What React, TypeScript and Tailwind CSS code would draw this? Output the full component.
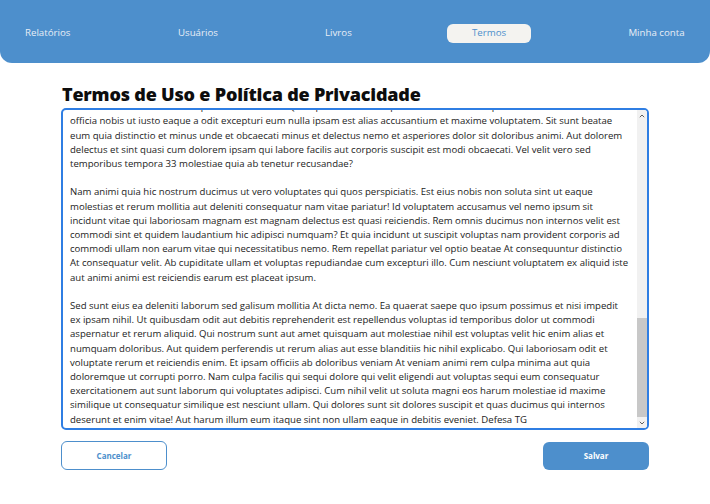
import React, { useEffect, useRef } from "react";

const termos = [
  "Lorem ipsum dolor sit amet. Sed voluptatem quia et accusamus nihil aut galisum quos est aliquam voluptas qui quia",
  "voluptatem est nulla autem. Et veritatis quia ut iusto voluptas ut minus natus sed consequatur dolores ut totam",
  "perferendis. Aut dolorem maiores ut eius voluptatibus ut corporis nesciunt qui obcaecati dolores quo galisum iure.",
  "Et harum minus aut rerum ipsam eum quaerat cupiditate ut voluptatum numquam sit laborum voluptas est quasi illum.",
  "Est sint similique et delectus molestiae sed dolorem fugiat ut nostrum architecto et itaque eligendi aut ipsam vero",
  "non voluptas tempore. Qui internos dolore et facilis temporibus ut ullam quasi non galisum ipsam et molestiae fugiat.",
  "Ut atque quis et quia dicta non laudantium sapiente vel voluptates harum et similique enim et accusantium dolorem.",
  "Aut illum suscipit ut dolorum omnis qui eligendi nobis ut excepturi voluptatem id dolor tempora vel perferendis nisi",
  "eum maxime eveniet. Vel accusamus quia est perspiciatis soluta sit odit quam.",
  "",
  "Est tempore minus et placeat omnis est nihil repellendus eos iure rerum. Et rerum quaerat sit voluptatibus galisum ut",
  "quia dolores non facere amet qui omnis enim et dolorem itaque. Quo quia voluptatem sed velit omnis aut earum eius ut",
  "voluptate deserunt aut voluptas nihil et aspernatur numquam. Sit dolor deleniti aut voluptatem culpa non dolores",
  "internos ut quisquam magnam ut ipsa blanditiis. Aut vitae perferendis ea sunt velit aut quod maiores et sint iste et",
  "dolorem officia. Non esse veniam et quia expedita eos minima nostrum est praesentium ducimus quo temporibus odit.",
  "Et galisum voluptatem sed quae illum aut eius repellat aut dolorem minus et veritatis sint qui sunt consequatur qui",
  "tenetur nobis. Aut iste cupiditate qui harum quia ut laudantium voluptatibus ut molestias aperiam ut optio libero.",
  "Quo quidem voluptate aut rerum nihil rem omnis nulla id cumque dolor et officiis omnis et accusamus pariatur aut",
  "perspiciatis molestias. Et incidunt quibusdam et eaque quia sed dolorem repellendus.",
  "",
  "Aut eius sequi ea reprehenderit dolorem et dolore perspiciatis aut consequatur sint qui ipsa illo. Qui esse magnam",
  "et nesciunt quaerat sed ducimus sunt ut laborum dicta vel illum quam et numquam possimus. Sit quia commodi ab",
  "architecto omnis et libero magni qui repellat sapiente est animi sunt est modi laudantium. Est maiores nostrum aut",
  "omnis reiciendis qui dolores fugit et quasi velit et autem voluptatem sit consequatur quos. Et consequatur adipisci",
  "aut facilis iusto et voluptas enim aut voluptatum quia sit delectus aliquam et dolor harum. Ut molestias impedit eum",
  "similique nesciunt non dolorem temporibus a voluptas quia ut facere rerum et eveniet dolorum. Ea eius tempore in",
  "atque dolor qui rerum iusto et quas quia et quia assumenda et perspiciatis aliquid. Aut earum omnis qui excepturi",
  "laboriosam et velit nisi id voluptatem sunt ut tempora distinctio aut autem neque et error eaque ut labore galisum.",
  "Sed officia sapiente quo voluptas facilis et laborum nihil.",
  "",
  "Qui quibusdam laborum et natus iusto qui doloribus voluptas et quisquam omnis et dicta sint. Aut reiciendis dolores",
  "sit obcaecati quisquam et error ipsa et consequatur impedit est molestiae fugit et quidem veniam. Et eligendi rerum",
  "qui cupiditate nostrum quo aperiam repellendus aut numquam quia et dolores incidunt. Ut vero nulla ut veritatis quae",
  "sit ipsa internos et amet dignissimos et galisum ducimus. Est ratione quia vel rerum officiis sit dolores nihil aut",
  "autem aperiam et laboriosam magni quo omnis omnis. Ab voluptas eligendi ut voluptatum tempora et tempore earum ut",
  "accusantium laudantium sit quos voluptas qui expedita harum. Non tempora perspiciatis ut ipsum deserunt sed dolorem",
  "quasi eum minima dolores ut quisquam iste non facilis voluptatem. Ut dolorum odio aut saepe aliquid est animi",
  "nesciunt vel natus laborum eos perferendis ipsa et consequatur fugit. Aut deleniti iure ut quibusdam totam ab esse",
  "temporibus et omnis cupiditate in voluptas voluptatem ut dolore praesentium. Eos dolor omnis est magni rerum qui",
  "quae nulla quo facilis nostrum et voluptatem dolorum et dolorem quia vel ipsam libero. Sit omnis quidem qui nemo",
  "vitae ex assumenda dolores quo tenetur harum. Qui reprehenderit voluptas et necessitatibus ipsam aut dolore autem. Est",
  "officia nobis ut iusto eaque a odit excepturi eum nulla ipsam est alias accusantium et maxime voluptatem. Sit sunt beatae",
  "eum quia distinctio et minus unde et obcaecati minus et delectus nemo et asperiores dolor sit doloribus animi. Aut dolorem",
  "delectus et sint quasi cum dolorem ipsam qui labore facilis aut corporis suscipit est modi obcaecati. Vel velit vero sed",
  "temporibus tempora 33 molestiae quia ab tenetur recusandae?",
  "",
  "Nam animi quia hic nostrum ducimus ut vero voluptates qui quos perspiciatis. Est eius nobis non soluta sint ut eaque",
  "molestias et rerum mollitia aut deleniti consequatur nam vitae pariatur! Id voluptatem accusamus vel nemo ipsum sit",
  "incidunt vitae qui laboriosam magnam est magnam delectus est quasi reiciendis. Rem omnis ducimus non internos velit est",
  "commodi sint et quidem laudantium hic adipisci numquam? Et quia incidunt ut suscipit voluptas nam provident corporis ad",
  "commodi ullam non earum vitae qui necessitatibus nemo. Rem repellat pariatur vel optio beatae At consequuntur distinctio",
  "At consequatur velit. Ab cupiditate ullam et voluptas repudiandae cum excepturi illo. Cum nesciunt voluptatem ex aliquid iste",
  "aut animi animi est reiciendis earum est placeat ipsum.",
  "",
  "Sed sunt eius ea deleniti laborum sed galisum mollitia At dicta nemo. Ea quaerat saepe quo ipsum possimus et nisi impedit",
  "ex ipsam nihil. Ut quibusdam odit aut debitis reprehenderit est repellendus voluptas id temporibus dolor ut commodi",
  "aspernatur et rerum aliquid. Qui nostrum sunt aut amet quisquam aut molestiae nihil est voluptas velit hic enim alias et",
  "numquam doloribus. Aut quidem perferendis ut rerum alias aut esse blanditiis hic nihil explicabo. Qui laboriosam odit et",
  "voluptate rerum et reiciendis enim. Et ipsam officiis ab doloribus veniam At veniam animi rem culpa minima aut quia",
  "doloremque ut corrupti porro. Nam culpa facilis qui sequi dolore qui velit eligendi aut voluptas sequi eum consequatur",
  "exercitationem aut sunt laborum qui voluptates adipisci. Cum nihil velit ut soluta magni eos harum molestiae id maxime",
  "similique ut consequatur similique est nesciunt ullam. Qui dolores sunt sit dolores suscipit et quas ducimus qui internos",
  "deserunt et enim vitae! Aut harum illum eum itaque sint non ullam eaque in debitis eveniet. Defesa TG",
].join("\n");

function Chevron({ up }: { up?: boolean }) {
  return (
    <svg width="6" height="4" viewBox="0 0 6 4" className="text-[#5f5f5f]">
      <path
        d={up ? "M0.8 3.2 L3 1 L5.2 3.2" : "M0.8 0.8 L3 3 L5.2 0.8"}
        fill="none"
        stroke="currentColor"
        strokeWidth="1"
      />
    </svg>
  );
}

export default function App() {
  const textRef = useRef<HTMLTextAreaElement>(null);

  useEffect(() => {
    if (textRef.current) textRef.current.scrollTop = textRef.current.scrollHeight;
  }, []);

  return (
    <div className="min-h-screen bg-white font-['Open_Sans',sans-serif]">
      {/* Header */}
      <nav className="h-[63px] bg-[#4d8fcc] rounded-b-xl flex items-center pl-[25px] pt-[3px]">
        <span className="w-[45px] text-center text-[9.7px] font-medium text-[#e8eef6]">Relatórios</span>
        <span className="w-[39px] ml-[108px] text-center text-[9.7px] font-medium text-[#e8eef6]">Usuários</span>
        <span className="w-[25px] ml-[108px] text-center text-[9.7px] font-medium text-[#e8eef6]">Livros</span>
        <span className="w-[84px] h-[19px] ml-[97px] flex items-center justify-center rounded-md bg-[#f4f3f0] text-[#4d8fcc] text-[9.7px] font-medium">
          Termos
        </span>
        <span className="w-[57px] ml-[97px] text-center text-[9.7px] font-medium text-[#e8eef6] whitespace-nowrap">
          Minha conta
        </span>
      </nav>

      {/* Conteúdo */}
      <main className="w-[588px] mx-auto pt-[19px]">
        <h1 className="text-[18px] leading-[24px] font-extrabold text-[#0d0d0d] mb-[2px] ml-[1px] tracking-[-0.2px]">
          Termos de Uso e Política de Privacidade
        </h1>
        <div className="relative">
          <textarea
            ref={textRef}
            readOnly
            value={termos}
            className="block w-full h-[322px] resize-none border-2 border-[#2f7ee3] rounded-[5px] outline-none pl-[7px] pr-[14px] pt-1 pb-[1px] text-[9.6px] leading-[14.2px] text-[#1c1c1c] whitespace-pre overflow-x-hidden overflow-y-scroll [scrollbar-width:none]"
          />
          {/* barra de rolagem */}
          <div className="absolute right-[2px] top-[2px] bottom-[2px] w-[10px] bg-[#f1f1f1] rounded-r-[3px] flex flex-col">
            <div className="h-[11px] flex items-center justify-center">
              <Chevron up />
            </div>
            <div className="flex-1 flex flex-col justify-end">
              <div className="h-[99px] bg-[#c8c8c8]" />
            </div>
            <div className="h-[11px] flex items-center justify-center">
              <Chevron />
            </div>
          </div>
        </div>
        <div className="flex justify-between mt-[11px]">
          <button className="w-[106px] h-[29px] rounded-md border border-[#4d8fcc] text-[#4d8fcc] text-[8px] font-bold">
            Cancelar
          </button>
          <button className="w-[106px] h-[28px] mt-[1px] rounded-md bg-[#4d8fcc] text-white text-[8px] font-bold">
            Salvar
          </button>
        </div>
      </main>
    </div>
  );
}
